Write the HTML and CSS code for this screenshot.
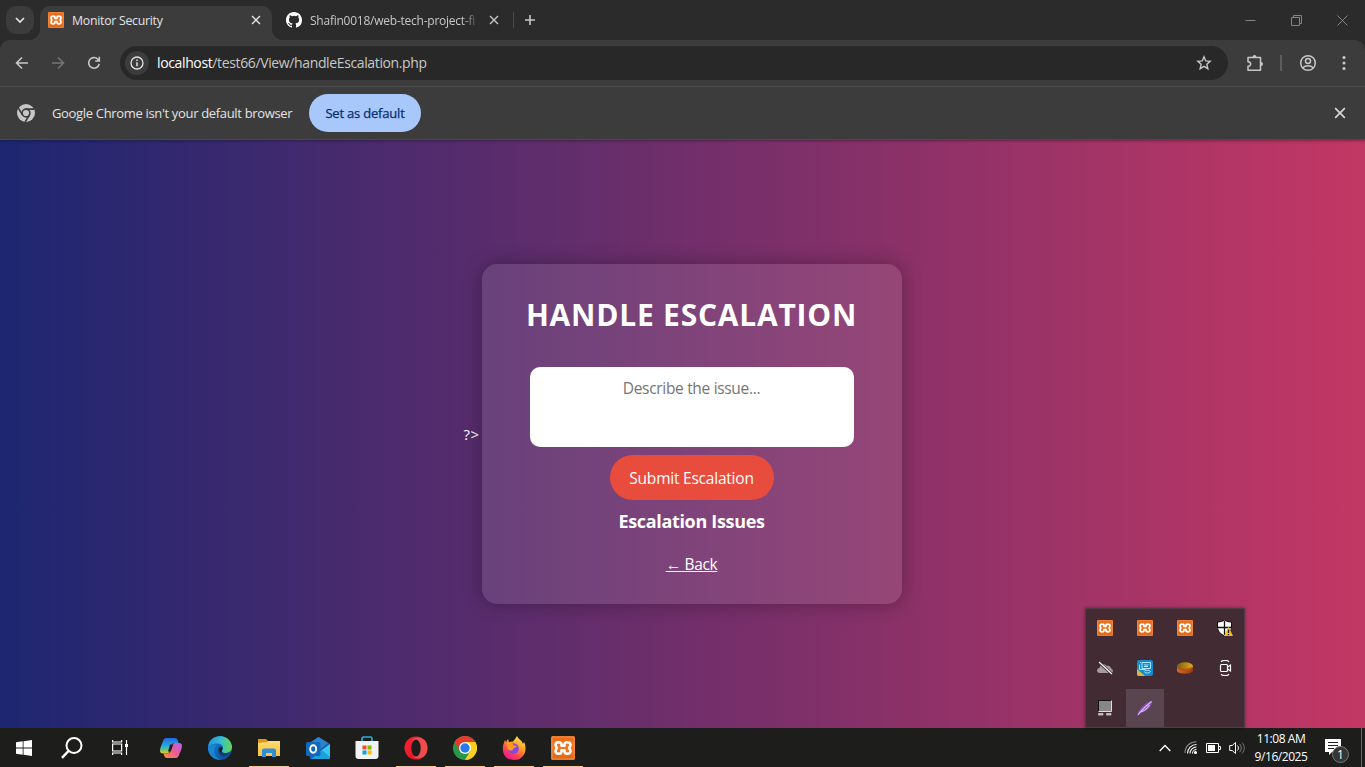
FILE: index.html
```html
<!DOCTYPE html>
<html lang="en">
<head>
<meta charset="utf-8">
<title>Monitor Security</title>
<link rel="stylesheet" href="styles.css">
</head>
<body>
<svg class="defs" aria-hidden="true">
  <defs>
    <linearGradient id="orange" x1="0" y1="0" x2="0" y2="1"><stop offset="0" stop-color="#e9691b"/><stop offset=".5" stop-color="#f07a22"/><stop offset="1" stop-color="#df6414"/></linearGradient>
    <linearGradient id="edge-a" x1="0" y1="0" x2="1" y2="0"><stop offset="0" stop-color="#2493dc"/><stop offset=".55" stop-color="#36bfce"/><stop offset="1" stop-color="#69d64b"/></linearGradient>
    <linearGradient id="edge-b" x1="0" y1="0" x2="1" y2="1"><stop offset="0" stop-color="#1788d8"/><stop offset="1" stop-color="#0b4696"/></linearGradient>
    <linearGradient id="cop-a" x1="0" y1="0" x2="0" y2="1"><stop offset="0" stop-color="#2367de"/><stop offset=".5" stop-color="#23a9e1"/><stop offset=".75" stop-color="#68c17b"/><stop offset="1" stop-color="#e8cb22"/></linearGradient>
    <linearGradient id="cop-b" x1="1" y1="0" x2="0" y2="1"><stop offset="0" stop-color="#b061f1"/><stop offset=".5" stop-color="#ed5b91"/><stop offset="1" stop-color="#fb9a35"/></linearGradient>
    <linearGradient id="folder" x1="0" y1="0" x2="0" y2="1"><stop offset="0" stop-color="#ffda73"/><stop offset="1" stop-color="#fbc23e"/></linearGradient>
    <linearGradient id="opera" x1="0" y1="0" x2="1" y2="1"><stop offset="0" stop-color="#ff2236"/><stop offset="1" stop-color="#d3151f"/></linearGradient>
    <linearGradient id="fox" x1=".8" y1="0" x2=".2" y2="1"><stop offset="0" stop-color="#fff04b"/><stop offset=".4" stop-color="#ff9a24"/><stop offset=".7" stop-color="#ff4052"/><stop offset="1" stop-color="#e71594"/></linearGradient>
    <linearGradient id="drum" x1="0" y1="0" x2="1" y2="0"><stop offset="0" stop-color="#de691d"/><stop offset="1" stop-color="#903b17"/></linearGradient>
    <linearGradient id="drum-top" x1="0" y1="0" x2="1" y2="0"><stop offset="0" stop-color="#75600d"/><stop offset="1" stop-color="#e6aa1a"/></linearGradient>
    <symbol id="xampp" viewBox="0 0 24 24"><rect width="24" height="24" rx="1.5" fill="url(#orange)"/><path d="M1 1h22v22H1z" fill="none" stroke="#f8a05c" stroke-width=".7"/><path d="M10.500 9.700V8.500C10.500 6.800 9.500 6.200 7.800 6.200C5.500 6.200 4.500 7.200 4.500 9C4.500 10.600 5.800 10.800 5.800 12C5.800 13.200 4.500 13.400 4.500 15C4.500 16.800 5.500 17.800 7.800 17.800C9.500 17.800 10.500 17.200 10.500 15.500V14.300H13.500V15.500C13.500 17.200 14.500 17.800 16.200 17.800C18.500 17.800 19.500 16.800 19.500 15C19.500 13.400 18.200 13.200 18.200 12C18.200 10.800 19.500 10.600 19.500 9C19.500 7.200 18.500 6.200 16.200 6.200C14.500 6.200 13.500 6.800 13.500 8.500V9.700Z" fill="none" stroke="#fff" stroke-width="2.500" stroke-linejoin="round"/></symbol>
    <symbol id="close" viewBox="0 0 10 10"><path d="M1 1l8 8M9 1L1 9" fill="none" stroke="currentColor" stroke-width="1.400"/></symbol>
  </defs>
</svg>

<header class="tabs">
  <button class="tab-search"><svg width="10" height="8" viewBox="0 0 10 8"><path d="M1 2l4 4 4-4" fill="none" stroke="currentColor" stroke-width="1.700"/></svg></button>
  <div class="tab tab-active">
    <svg width="16" height="16"><use href="#xampp"/></svg>
    <span class="tab-title t-monitor">Monitor Security</span>
    <svg class="tab-close" width="10" height="10"><use href="#close"/></svg>
  </div>
  <div class="tab tab-idle">
    <svg width="16" height="16" viewBox="0 0 16 16"><path fill="#fff" d="M8 0C3.580 0 0 3.580 0 8c0 3.540 2.290 6.530 5.470 7.590.4.070.55-.17.55-.38v-1.490c-2.010.37-2.530-.49-2.690-.94-.09-.23-.48-.94-.82-1.130-.28-.15-.68-.52-.01-.53.63-.01 1.080.58 1.230.82.72 1.210 1.870.87 2.330.66.070-.52.280-.87.510-1.070-1.780-.2-3.640-.89-3.640-3.950 0-.87.310-1.590.82-2.150-.08-.2-.36-1.020.08-2.120 0 0 .67-.21 2.200.82a7.500 7.500 0 0 1 4 0c1.530-1.040 2.200-.82 2.200-.82.440 1.100.160 1.920.08 2.120.51.560.82 1.270.82 2.150 0 3.070-1.870 3.750-3.650 3.950.290.250.540.730.540 1.480v2.200c0 .210.150.460.550.38A8 8 0 0 0 16 8c0-4.420-3.580-8-8-8z"/></svg>
    <span class="tab-title tab-fade t-git">Shafin0018/web-tech-project-fi</span>
    <svg class="tab-close" width="10" height="10"><use href="#close"/></svg>
  </div>
  <i class="tab-divider"></i>
  <svg class="new-tab" width="12" height="12" viewBox="0 0 12 12"><path d="M6 1v10M1 6h10" stroke="currentColor" stroke-width="1.600"/></svg>
  <div class="window-controls">
    <svg width="11" height="11" viewBox="0 0 11 11"><path d="M.5 5.500h10"/></svg>
    <svg width="11" height="11" viewBox="0 0 11 11"><path d="M.5 2.500h8v8h-8zM2.500 2.500v-2h8v8h-2"/></svg>
    <svg width="11" height="11" viewBox="0 0 11 11"><path d="M.5.5l10 10M10.500.5l-10 10"/></svg>
  </div>
</header>

<nav class="toolbar">
  <svg class="nav-icon" width="14" height="14" viewBox="0 0 14 14"><path d="M13 7H2M7 1.500L1.500 7 7 12.500"/></svg>
  <svg class="nav-icon nav-off" width="14" height="14" viewBox="0 0 14 14"><path d="M1 7h11M7 1.500L12.500 7 7 12.500"/></svg>
  <svg class="nav-icon" width="14" height="14" viewBox="0 0 14 14"><path d="M12.200 7.800A5.300 5.300 0 1 1 10.800 3.200L12.300 4.700M12.300.8v4.200H8.200"/></svg>
  <div class="address">
    <span class="site-info"><svg width="14" height="14" viewBox="0 0 14 14"><circle cx="7" cy="7" r="6" fill="none" stroke="currentColor" stroke-width="1.300"/><path d="M7 6.200v4M7 3.600v1.500" stroke="currentColor" stroke-width="1.500"/></svg></span>
    <span class="url"><b>localhost</b>/test66/View/handleEscalation.php</span>
    <svg class="star" width="16" height="16" viewBox="0 0 16 16"><path d="M8 1.800l1.750 4.150 4.450.4-3.350 2.950 1 4.400L8 11.400l-3.850 2.300 1-4.400L1.800 6.350l4.450-.4z" fill="none" stroke="currentColor" stroke-width="1.400"/></svg>
  </div>
  <svg class="puzzle" width="18" height="18" viewBox="0 0 18 18"><path d="M2 3.500h12.500v12.800H2v-4c3.500 0 3.500-4.500 0-4.500z" fill="none" stroke="currentColor" stroke-width="1.500" stroke-linejoin="round"/><path d="M6.500 3a2 2 0 0 1 4 0zM15 8a2 2 0 0 1 0 4z" fill="currentColor"/></svg>
  <i class="tool-divider"></i>
  <svg class="profile" width="18" height="18" viewBox="0 0 18 18" fill="none" stroke="currentColor" stroke-width="1.500"><circle cx="9" cy="9" r="7.300"/><circle cx="9" cy="7" r="2.500"/><path d="M3.700 13.700c2.800-2.700 7.800-2.700 10.600 0"/></svg>
  <svg class="kebab" width="4" height="16" viewBox="0 0 4 16" fill="currentColor"><circle cx="2" cy="2.500" r="1.600"/><circle cx="2" cy="8" r="1.600"/><circle cx="2" cy="13.500" r="1.600"/></svg>
</nav>

<section class="infobar">
  <svg width="18" height="18" viewBox="0 0 18 18"><circle cx="9" cy="9" r="9" fill="#c7c7c7"/><circle cx="9" cy="9" r="3.900" fill="none" stroke="#3c3c3c" stroke-width="1.600"/><path d="M9 5.100h8.200M5.600 11L1.400 4.200M12.400 11L8.200 18" stroke="#3c3c3c" stroke-width="1.600"/></svg>
  <span class="info-text">Google Chrome isn't your default browser</span>
  <button class="set-default"><span>Set as default</span></button>
  <svg class="info-close" width="12" height="12"><use href="#close"/></svg>
</section>

<main class="page">
  <span class="stray">?&gt;</span>
  <section class="card">
    <h1>HANDLE ESCALATION</h1>
    <div class="issue"><span>Describe the issue...</span></div>
    <button class="submit"><span>Submit Escalation</span></button>
    <h3><span>Escalation Issues</span></h3>
    <a class="back">← Back</a>
  </section>
</main>

<aside class="tray">
  <div><svg width="16" height="16"><use href="#xampp"/></svg></div>
  <div><svg width="16" height="16"><use href="#xampp"/></svg></div>
  <div><svg width="16" height="16"><use href="#xampp"/></svg></div>
  <div><svg width="16" height="16" viewBox="0 0 16 16"><path d="M7.500 0C5.500 1.500 3 2 .5 2v5c0 4 3 7 7 9 4-2 7-5 7-9V2c-2.500 0-5-.5-7-2z" fill="#fff" stroke="#111"/><path d="M7.500 1v14M1 7.500h13" stroke="#111" stroke-width="1.300"/><path d="M11.500 6.500L16 16H7z" fill="#fbc015"/><path d="M11.500 9.500v3.500M11.500 14v1.300" stroke="#222" stroke-width="1.300"/></svg></div>
  <div><svg width="16" height="16" viewBox="0 0 16 16"><path d="M2 13C-.8 12-.5 8.500 2.500 8 3 4.500 7 2.500 10 6c2-.5 3.500.5 4 2.500 2.500.5 2.500 4.500 0 4.500z" fill="#a59ca0"/><path d="M1.500 2L15 14" stroke="#432b35" stroke-width="3"/><path d="M2 2l13 12" stroke="#fff" stroke-width="1.200"/></svg></div>
  <div><svg width="16" height="16" viewBox="0 0 16 16"><rect width="16" height="16" rx="2" fill="#168bce"/><path d="M0 9l8 7H2a2 2 0 0 1-2-2z" fill="#d5b744"/><path d="M5 2.500h8.500v6H5zM2.500 4.500v5h6M7 5h4.500M7 6.500h4M7.500 11c2-1.500 5-1 6 .5-1.500 2-4.500 2-6 .5M3 2.500h1" fill="none" stroke="#a9e5ff" stroke-width="1"/></svg></div>
  <div><svg width="16" height="16" viewBox="0 0 16 16"><path d="M0 6.500v4c0 4.200 16 4.200 16 0v-4z" fill="url(#drum)"/><ellipse cx="8" cy="6.300" rx="8" ry="4" fill="url(#drum-top)"/><path d="M0 6.500c3 2.800 11 3 16 0v1.500c-4 3.500-13 3.500-16 0z" fill="#b9531e"/></svg></div>
  <div><svg width="16" height="16" viewBox="0 0 16 16" fill="none" stroke="#fff" stroke-width="1.200"><rect x="3.500" y="4.500" width="7" height="7" rx="1"/><path d="M10.500 7l3-2v6l-3-2M4 1.800C5.500-.1 10.500-.1 12 1.800M4 14.200c1.500 1.900 6.500 1.900 8 0"/></svg></div>
  <div><svg width="16" height="16" viewBox="0 0 16 16"><path d="M1.500.5h13v11h-13z" fill="#878787"/><path d="M1.500 11.500V.5h13" fill="none" stroke="#111"/><path d="M14.500.5v11h-13" fill="none" stroke="#ddd"/><rect x="1" y="13" width="5.500" height="2.500" rx="1" fill="#bbb"/><rect x="9" y="13" width="5.500" height="2.500" rx="1" fill="#bbb"/></svg></div>
  <div class="tray-hover"><svg width="16" height="16" viewBox="0 0 16 16"><path d="M.5 15.500C.5 10 7 3.500 15.300.5 15.500 6 10 11.500 3.500 13z" fill="#8750b5"/><path d="M1 15C4 10.500 9 6 14.500 1.500M3.500 12c4-1 7-4 9-7" stroke="#dcbcf5" stroke-width="1.100" fill="none"/></svg></div>
</aside>

<footer class="taskbar">
  <div class="task start"><svg width="16" height="16" viewBox="0 0 16 16" fill="#fff"><path d="M0 2.200l6.700-.9v6.300H0zM7.500 1.200L16 0v7.600H7.500zM0 8.400h6.700v6.300L0 13.800zM7.500 8.400H16V16l-8.500-1.200z"/></svg></div>
  <div class="task"><svg width="24" height="24" viewBox="0 0 24 24" fill="none" stroke="#fff" stroke-width="2"><circle cx="14" cy="9.500" r="7.500"/><path d="M8.500 15L2 21.800" stroke-width="2.500"/></svg></div>
  <div class="task"><svg width="18" height="17" viewBox="0 0 18 17" fill="none" stroke="#fff" stroke-width="1.200"><path d="M1.600 5h9v7h-9zM1.600 1v2h9V1M1.600 16v-2h9v2M15.500 1v15"/><path d="M14 5h3v3h-3z" fill="#fff" stroke="none"/></svg></div>
  <div class="task"><svg width="24" height="22" viewBox="0 0 24 22"><path d="M7 1h9c2 0 2.500 1.500 3 3l.5 2h-3.800c-2 0-2.700 1.300-3.200 3l-1.700 5c-.7 2-1.700 2.500-4 2.500H4c-4 0-3-4-2.500-6L4 4c.7-2 1.500-3 3-3z" fill="url(#cop-a)"/><path d="M17 21H8c-2 0-2.600-1.500-3-3l-.5-1.500h3.800c2 0 2.700-1.200 3.200-3l1.700-5c.7-2 1.700-2.500 4-2.500H20c4 0 3 4 2.500 6L20 18c-.7 2-1.500 3-3 3z" fill="url(#cop-b)"/><path d="M11 7.500h3.200l-2.400 7H9z" fill="#1d1d1c"/></svg></div>
  <div class="task"><svg width="24" height="24" viewBox="0 0 24 24"><circle cx="12" cy="12" r="12" fill="url(#edge-b)"/><path d="M0 11C1-1 18-4 23 7c3 6-1 11-7 10-3-.4-3-2-1.800-3.200 2-2 .3-6.300-4.500-6.300C5 7.500 1 9 0 11z" fill="url(#edge-a)"/><path d="M14.200 13.800c-1.200 1.200-1 3 2 3.200 2 .2 4.200-.3 6-1.500-1 2-2.500 3.700-4.500 4.500-7 1.500-9.500-6-6-9 2-.8 3 1.500 2.500 2.800z" fill="#163d70"/><path d="M8 9c-4 6-1 13 5 14.800C5 24 0 18 0 12c1-4 5-4.500 8-3z" fill="#1a86d2"/><path d="M12 11c2-.6 3 1.200 2.300 2.800-1.100 1.400-.8 2.700 1.200 3.100-3.500 0-5.500-3.400-3.500-5.900z" fill="#1d1d1c"/></svg></div>
  <div class="task open"><svg width="22" height="20" viewBox="0 0 22 20"><path d="M0 1h8l2 2v15H0z" fill="#dc990f"/><path d="M0 5l9-1 1-1h12v15H0z" fill="url(#folder)"/><path d="M4 19v-6.500a2 2 0 0 1 2-2h10a2 2 0 0 1 2 2V19h-4v-4H8v4z" fill="#328ed4"/></svg></div>
  <div class="task"><svg width="24" height="22" viewBox="0 0 24 22"><path d="M2 7L12.500 0 24 7v15H4z" fill="#1763b5"/><path d="M5 5l7.500-5L22 6l-8 6z" fill="#2e83d1"/><path d="M24 7v12a3 3 0 0 1-3 3H6l10-9z" fill="#39c8ed"/><path d="M6 22l10-9 8 7-2 2z" fill="#1ca1df"/><rect x="0" y="5" width="14.500" height="14" rx="1.500" fill="#1269bc"/><ellipse cx="7.200" cy="12" rx="3" ry="3.700" fill="none" stroke="#fff" stroke-width="1.900"/></svg></div>
  <div class="task"><svg width="24" height="24" viewBox="0 0 24 24"><path d="M7 6V2.500C7 1.500 7.500 1 8.500 1h7c1 0 1.500.5 1.500 1.500V6" fill="none" stroke="#27aede" stroke-width="1.600"/><path d="M.5 5h23v15a3 3 0 0 1-3 3h-17a3 3 0 0 1-3-3z" fill="#f2f2f2"/><path d="M7.500 9.500h4v4h-4z" fill="#f25022"/><path d="M12.500 9.500h4v4h-4z" fill="#7fba00"/><path d="M7.500 14.500h4v4h-4z" fill="#00a4ef"/><path d="M12.500 14.500h4v4h-4z" fill="#ffb900"/></svg></div>
  <div class="task open"><svg width="24" height="24" viewBox="0 0 24 24"><ellipse cx="12" cy="12" rx="11.500" ry="11.500" fill="url(#opera)"/><path d="M8.200 4C12 0 19 1 22 6c2 4 2 8 0 12-3 5-10 6-13.800 2 8 3 11-12 0-16z" fill="#f04b4d"/><ellipse cx="12" cy="12" rx="4.700" ry="8.600" fill="#1d1d1c"/></svg></div>
  <div class="task open"><svg width="24" height="24" viewBox="0 0 24 24"><circle cx="12" cy="12" r="12" fill="#279847"/><path d="M12 12L1.600 6A12 12 0 0 1 22.400 6z" fill="#e33b2e"/><path d="M12 6h10.400A12 12 0 0 1 12 24l5.200-9z" fill="#fdd01d"/><path d="M1.600 6l5.200 9L12 6z" fill="#e33b2e"/><circle cx="12" cy="12" r="6" fill="#fff"/><circle cx="12" cy="12" r="4.700" fill="#257ce8"/></svg></div>
  <div class="task open"><svg width="24" height="24" viewBox="0 0 24 24"><path d="M3 4l1 2 2-3 1 3 4-.5L13 3l2-3c1 3 5 4 6 8l1-2c4 8 0 18-10 18C4 24-.5 18 1.200 9z" fill="url(#fox)"/><circle cx="11.500" cy="12.500" r="5.300" fill="#8646e5"/><path d="M4 7.500c3-2 7-.5 8 2l3 .5c-1 2-3 1.500-4 3 0 2-3 2-5 .5z" fill="#ff9825"/></svg></div>
  <div class="task open"><svg width="24" height="24"><use href="#xampp"/></svg></div>
  <div class="system">
    <svg class="chev" width="12" height="8" viewBox="0 0 12 8"><path d="M.7 7L6 1.500 11.300 7" fill="none" stroke="#fff" stroke-width="1.300"/></svg>
    <svg class="wifi" width="14" height="13" viewBox="0 0 14 13" fill="none" stroke="#fff" stroke-width="1.100"><path d="M1 12C1 5 6 .8 12.500.8" stroke="#888"/><path d="M3.500 12.500c0-5 4-9 9-9M6 12.500c0-3.500 3-6.500 6.500-6.500M8.500 12.500c0-2 1.500-4 4-4"/><circle cx="11.500" cy="11.500" r="1" fill="#fff"/></svg>
    <svg class="battery" width="15" height="10" viewBox="0 0 15 10"><path d="M.5.5h12v9H.5zM13 3.500h1.500v3H13" fill="none" stroke="#fff"/><path d="M2 2h7v6H2z" fill="#fff"/></svg>
    <svg class="sound" width="16" height="14" viewBox="0 0 16 14" fill="none" stroke="#fff"><path d="M.7 4.500h2.500L6.500 1.500v11L3.200 9.500H.7zM8.500 4.500c1.200 1.500 1.200 3.500 0 5"/><path d="M10.700 3c2 2.500 2 5.500 0 8M13 1.500c3 3.500 3 7.500 0 11" stroke="#777"/></svg>
    <div class="clock"><span class="time">11:08 AM</span><span class="date">9/16/2025</span></div>
    <div class="notify"><svg width="16" height="16" viewBox="0 0 16 16"><path d="M0 0h16v13H7l-3 3v-3H0z" fill="#fff"/><path d="M3 3.500h10M3 6.500h10M3 9.500h6" stroke="#222"/></svg><span class="badge">1</span></div>
    <i class="desktop-edge"></i>
  </div>
</footer>
</body>
</html>
```
FILE: styles.css
```css
* { box-sizing: border-box; }
body { margin: 0; width: 1365px; height: 767px; overflow: hidden; display: grid; grid-template-rows: 40px 47px 53px 588px 39px; font-family: "Open Sans", "Noto Sans", sans-serif; background: #3c3c3c; color: #e3e3e3; }
svg { display: block; flex: none; }
button { border: 0; padding: 0; font-family: inherit; }
.defs { position: absolute; width: 0; height: 0; }

.tabs { display: flex; align-items: center; background: #2b2b2b; padding-left: 6px; color: #c7c7c7; }
.tab-search { width: 28px; height: 28px; border-radius: 10px; background: #3c3c3c; color: #e3e3e3; display: grid; place-items: center; }
.tab { display: flex; align-items: center; height: 34px; margin-top: 6px; padding: 0 11px 6px 8px; font-size: 12px; white-space: nowrap; }
.tab svg { margin-right: 8px; }
.tab .tab-close { margin: 0 0 0 auto; }
.tab-active { position: relative; width: 232px; margin-left: 6px; border-radius: 10px 10px 0 0; background: #3c3c3c; color: #e3e3e3; }
.tab-active::before, .tab-active::after { content: ""; position: absolute; bottom: 0; width: 10px; height: 10px; }
.tab-active::before { left: -10px; background: radial-gradient(circle at 0 0, #2b2b2b 9.500px, #3c3c3c 10px); }
.tab-active::after { right: -10px; background: radial-gradient(circle at 100% 0, #2b2b2b 9.500px, #3c3c3c 10px); }
.tab-idle { width: 241px; padding-left: 14px; padding-right: 14px; }
.tab-fade { width: 168px; mask-image: linear-gradient(90deg, #000 152px, transparent 170px); }
.t-monitor { letter-spacing: -.27px; font-size: 12.300px; }
.t-git { letter-spacing: -.24px; }
.tab-divider { width: 1px; height: 16px; background: #4b4b4b; }
.new-tab { margin-left: 10px; }
.window-controls { display: flex; gap: 35px; margin-left: auto; margin-right: 17px; fill: none; stroke: #858585; }

.toolbar { display: flex; align-items: center; padding: 0 19px 1px 15px; border-bottom: 1px solid #4a4a4a; color: #c7c7c7; border-radius: 10px 10px 0 0; box-shadow: 0 -10px 0 #2b2b2b; clip-path: inset(0); }
.nav-icon { margin-right: 22px; fill: none; stroke: currentColor; stroke-width: 1.600; }
.nav-off { color: #757575; }
.address { width: 1108px; height: 34px; border-radius: 17px; background: #282828; display: flex; align-items: center; padding: 0 16px 0 5px; margin-left: -3px; }
.site-info { width: 24px; height: 24px; border-radius: 50%; background: #3c3c3c; color: #e3e3e3; display: grid; place-items: center; }
.url { margin-left: 8px; font-size: 14px; letter-spacing: -.370px; color: #c7c7c7; }
.url b { font-weight: 400; color: #fff; }
.star { margin-left: auto; }
.puzzle { margin-left: 18px; }
.tool-divider { width: 2px; height: 16px; margin-left: 16px; background: #5d5d5d; }
.profile { margin-left: 17px; }
.kebab { margin-left: auto; }

.infobar { display: flex; align-items: center; padding: 0 19px 0 17px; border-bottom: 1px solid #4a4a4a; }
.info-text { margin-left: 17px; width: 257px; font-size: 13px; white-space: nowrap; letter-spacing: -.330px; }
.set-default { width: 112px; height: 38px; border-radius: 19px; background: #a8c7fa; color: #062e6f; font-size: 13px; font-weight: 500; letter-spacing: -.200px; -webkit-text-stroke: .25px #062e6f; }
.info-close { margin-left: auto; color: #d5d5d5; }

.page { display: flex; justify-content: center; align-items: center; background: linear-gradient(90deg, #1d2671, #c33764); box-shadow: inset 0 3px 3px -2px #0005; color: #fff; }
.stray { width: 18px; font-size: 15px; letter-spacing: .5px; white-space: nowrap; }
.card { width: 420px; height: 340px; border-radius: 15px; background: #ffffff1a; box-shadow: 0 0 20px #0000004d; display: flex; flex-direction: column; align-items: center; padding-top: 29px; }
h1 { margin: 0; height: 74px; line-height: 44px; font-size: 30px; letter-spacing: .770px; white-space: nowrap; }
.issue { width: 324px; height: 80px; border-radius: 10px; background: #fff; color: #757575; padding-top: 11px; text-align: center; font-size: 15.500px; letter-spacing: -.320px; line-height: 21px; }
.submit { width: 164px; height: 45px; margin-top: 8px; border-radius: 23px; background: #e74c3c; color: #fff; font-size: 15.500px; letter-spacing: -.220px; white-space: nowrap; }
h3 { margin: 9px 0 0; font-size: 18px; letter-spacing: -.330px; line-height: 25px; white-space: nowrap; }
.back { margin-top: 19px; font-size: 15.500px; letter-spacing: -.350px; line-height: 22px; text-decoration: underline; }

.tray { position: absolute; left: 1085px; top: 608px; width: 160px; height: 120px; display: grid; grid-template: repeat(3, 40px) / repeat(4, 40px); background: #432b34; box-shadow: 0 0 3px #0006, inset 0 0 0 1px #553b45; }
.tray div { display: grid; place-items: center; }
.tray .tray-hover { background: #594550; width: 38px; height: 38px; margin: 1px; }

.taskbar { display: flex; background: #1d1d1c; color: #fff; }
.task { width: 49px; height: 39px; display: grid; place-items: center; flex: none; position: relative; }
.task:nth-child(-n+3) { width: 48px; }
.task:nth-child(4) { width: 53px; margin-right: -2px; }
.task.open::after { content: ""; position: absolute; left: 5px; right: 4px; bottom: 0; height: 1px; background: #f6c68f; }
.system { margin-left: auto; display: flex; align-items: center; width: 206px; }
.wifi { margin-left: 13px; }
.battery { margin-left: 8px; }
.sound { margin-left: 8px; }
.clock { width: 72px; display: grid; grid-template-rows: 18px 18px; justify-items: center; font-size: 12px; line-height: 18px; letter-spacing: -.450px; white-space: nowrap; }
.notify { position: relative; width: 30px; height: 16px; margin-left: 8px; margin-top: -1px; }
.badge { position: absolute; left: 7px; top: 7px; width: 17px; height: 17px; border: 1px solid #777; border-radius: 50%; background: #353535; font-size: 12px; line-height: 15px; text-align: center; }
.desktop-edge { width: 1px; height: 39px; background: #666; margin-left: auto; margin-right: 3px; }
```
